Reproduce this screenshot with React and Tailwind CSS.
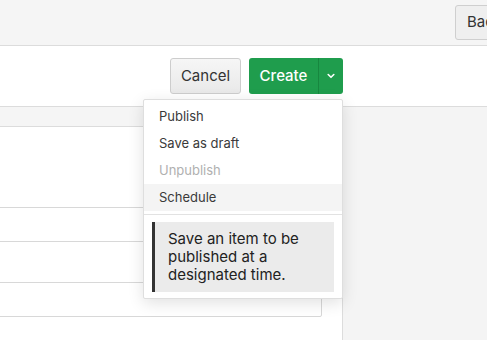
import React from "react";

const menuItems = [
  { label: "Publish" },
  { label: "Save as draft" },
  { label: "Unpublish", disabled: true },
  { label: "Schedule", active: true },
];

function Chevron() {
  return (
    <svg width="8" height="6" viewBox="0 0 8 6" fill="none">
      <polyline
        points="1.2,1.5 4,4.3 6.8,1.5"
        stroke="white"
        strokeWidth="1.6"
        strokeLinecap="round"
        strokeLinejoin="round"
      />
    </svg>
  );
}

export default function App() {
  return (
    <div
      className="w-[487px] h-[340px] overflow-hidden bg-white flex flex-col text-[#333]"
      style={{ fontFamily: "Inter, 'Noto Sans', sans-serif" }}
    >
      {/* top bar */}
      <div className="h-[46px] shrink-0 bg-[#f5f5f5] border-b border-[#dcdcdc] flex justify-end items-start pt-[5px]">
        <button className="h-[35px] w-[70px] shrink-0 ml-auto mr-[-38px] pl-[11px] text-left bg-[#efefef] border border-[#cfcfcf] rounded-[3px] text-[15px] text-[#333]">
          Back
        </button>
      </div>

      {/* actions */}
      <div className="h-[60px] shrink-0 flex items-center justify-end pr-[144px] gap-[8px]">
        <button className="h-[36px] w-[71px] rounded-[3px] border border-[#cdcdcd] bg-gradient-to-b from-[#f6f6f6] to-[#e9e9e9] text-[15px] text-[#333]">
          Cancel
        </button>
        <div className="relative flex h-[36px] rounded-[3px] bg-[#1f9d4d] text-white">
          <button className="w-[70px] text-[15px] font-medium border-r border-[#17873f]">
            Create
          </button>
          <button className="w-[24px] flex items-center justify-center">
            <Chevron />
          </button>

          {/* dropdown */}
          <div className="absolute right-0 top-[41px] z-10 w-[200px] bg-white border border-[#dedede] rounded-[2px] shadow-[0_4px_16px_rgba(0,0,0,0.12)] pt-[3px] pb-[6px] text-[#333]">
            {menuItems.map((item) => (
              <div
                key={item.label}
                className={`h-[27px] flex items-center pl-[15px] text-[13px] ${
                  item.active ? "bg-[#f4f4f4]" : ""
                } ${item.disabled ? "text-[#b0b0b0]" : "text-[#3a3a3a]"}`}
              >
                {item.label}
              </div>
            ))}
            <div className="mt-[3px] border-t border-[#e2e2e2]" />
            <div className="mx-[8px] mt-[7px] bg-[#ebebeb] border-l-[3px] border-[#333] pl-[13px] pr-[12px] py-[8px] text-[15px] leading-[18px] text-[#222]">
              Save an item to be published at a designated time.
            </div>
          </div>
        </div>
      </div>

      {/* body */}
      <div className="flex flex-1">
        <div className="w-[342px] shrink-0 flex flex-col">
          <div className="h-[21px] bg-[#f5f5f5] border-y border-[#dcdcdc]" />
          <div className="mt-[80px] ml-[-4px] w-[326px] h-[35px] border border-[#d8d8d8] rounded-[2px]" />
          <div className="mt-[40px] ml-[-4px] w-[326px] h-[35px] border border-[#d8d8d8] rounded-[2px]" />
        </div>
        <div className="flex-1 bg-[#f4f4f4] border-l border-t border-[#dcdcdc]" />
      </div>
    </div>
  );
}
